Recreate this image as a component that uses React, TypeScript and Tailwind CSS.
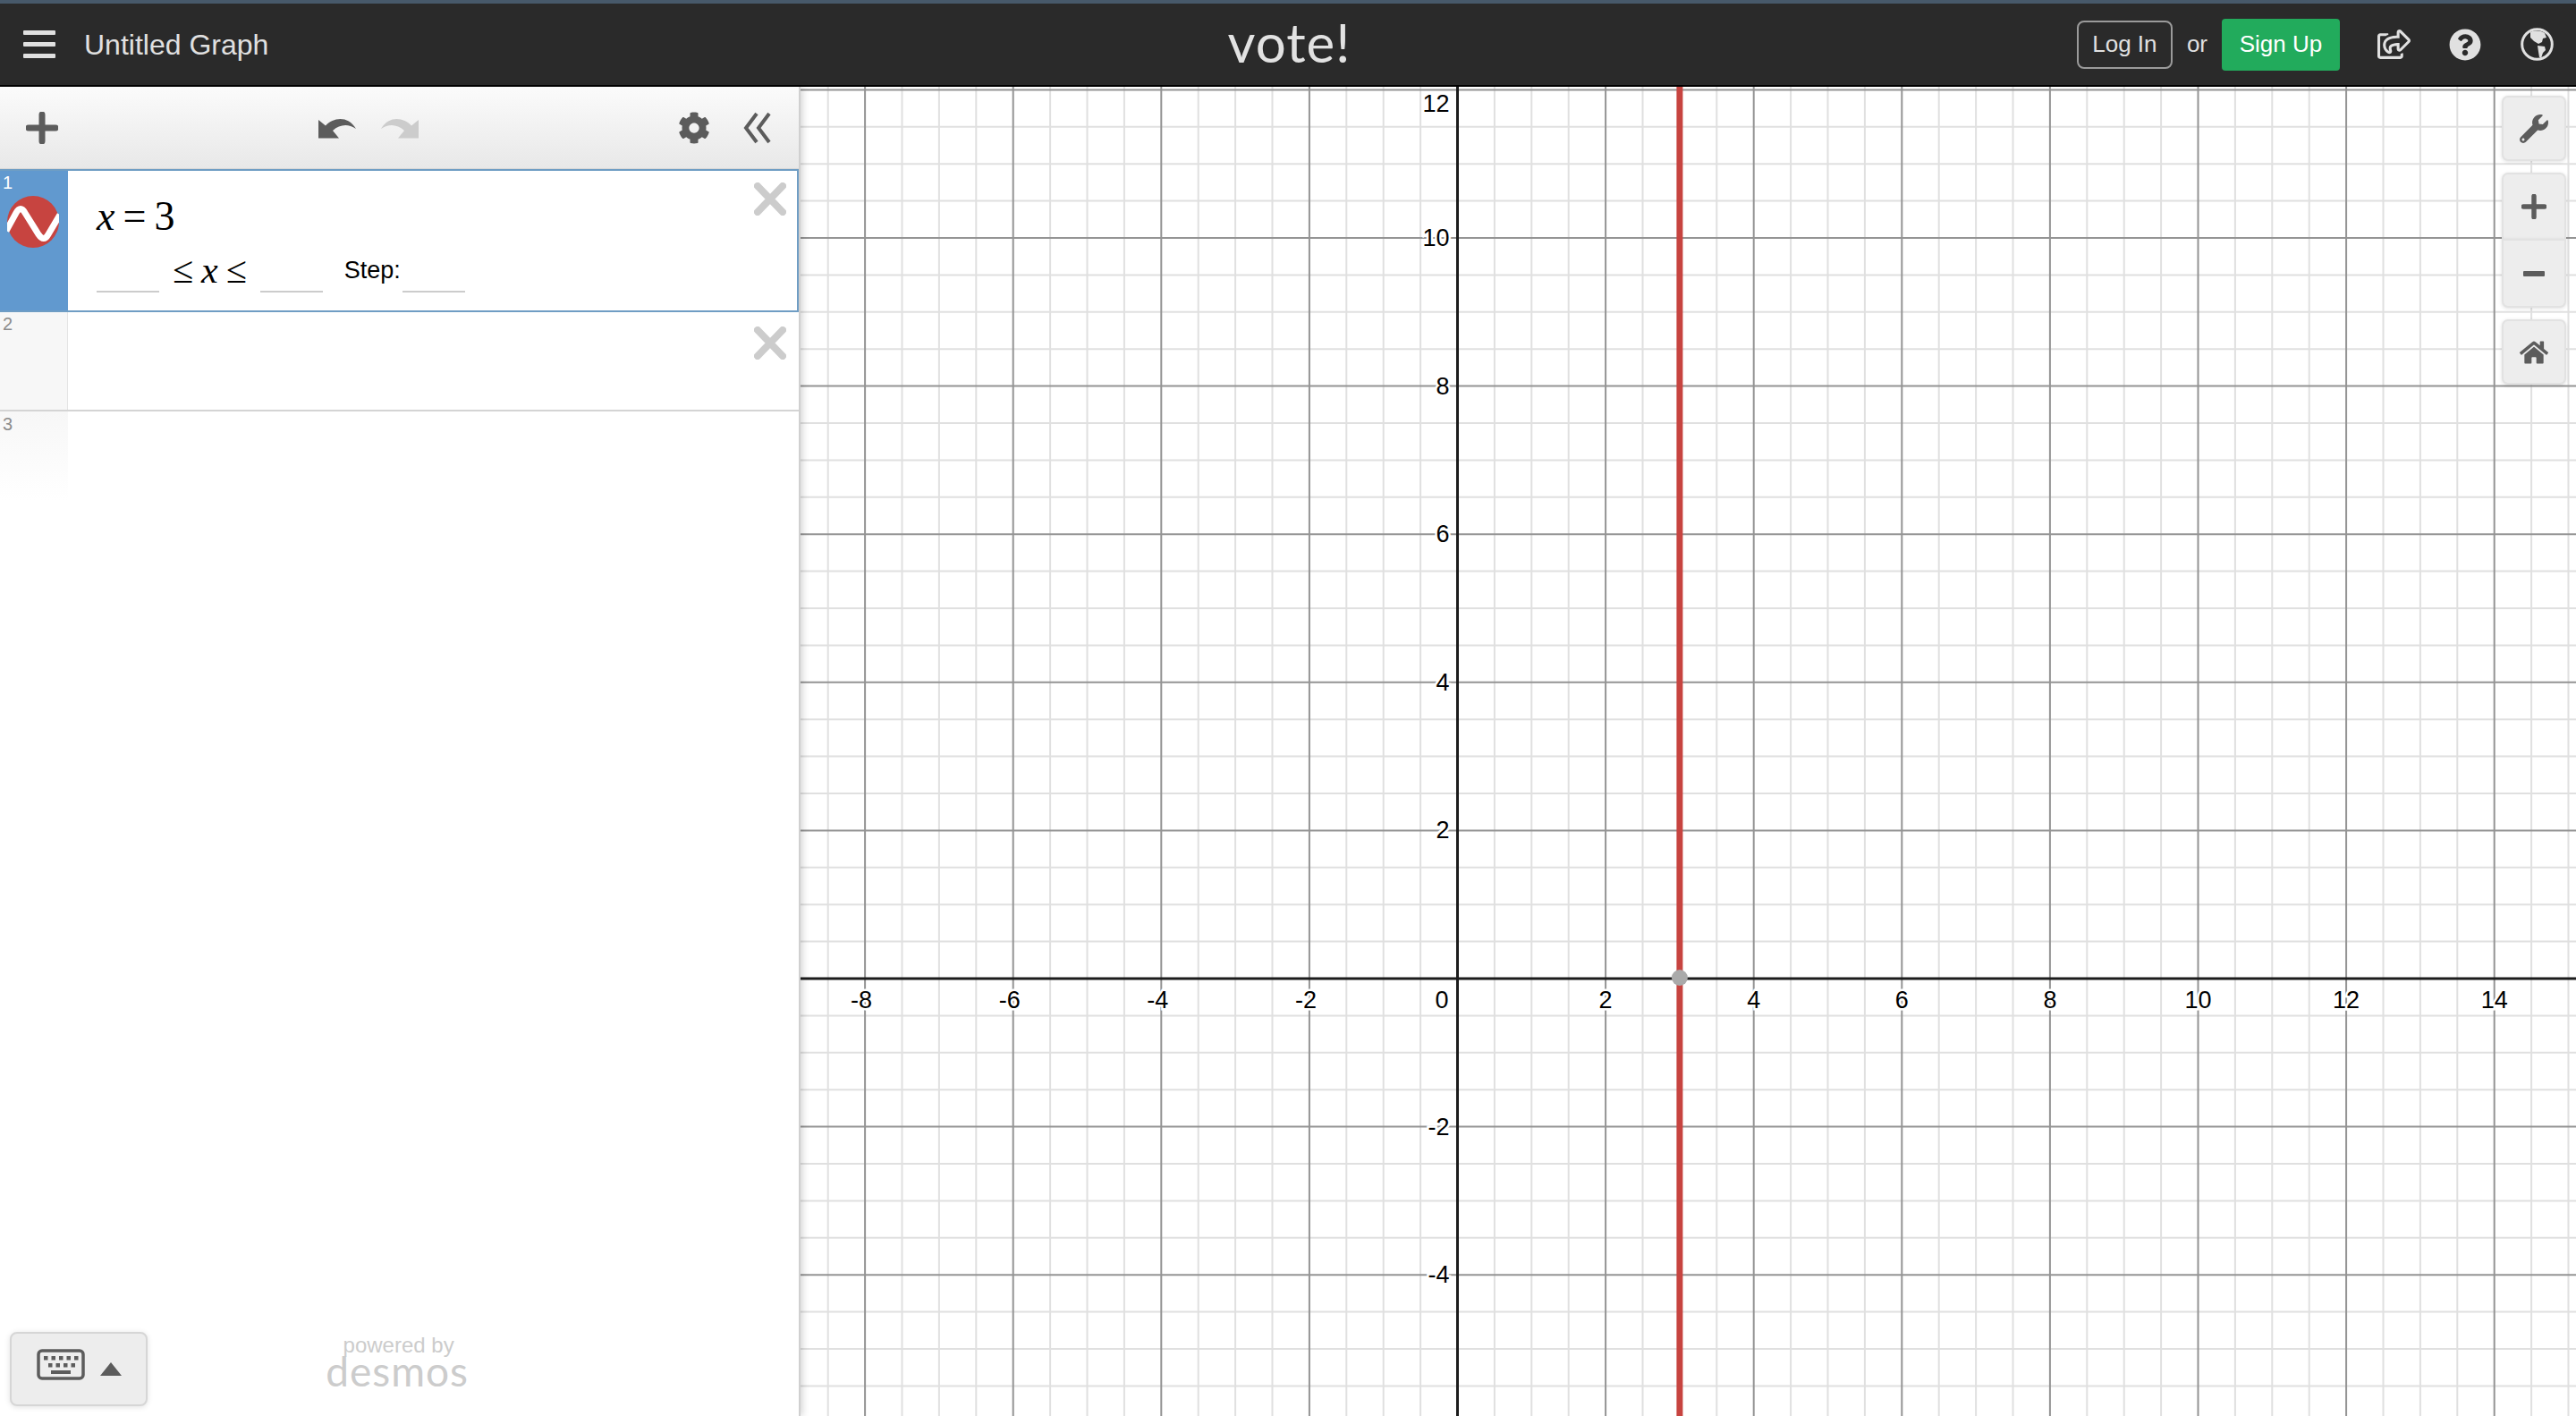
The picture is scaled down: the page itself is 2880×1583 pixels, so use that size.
import { FaCog, FaHome, FaQuestionCircle, FaRegShareSquare, FaWrench } from "react-icons/fa";

const sans = "font-['Liberation_Sans',Arial,sans-serif]";

// graph geometry, in page pixels with the graph's own corner taken off
const graphLeft = 895;
const graphTop = 97;
const graphWidth = 2880 - graphLeft;
const graphHeight = 1583 - graphTop;
const originX = 1629.5 - graphLeft;
const originY = 1094 - graphTop;
const unit = 82.8;

function range(from: number, to: number) {
  const out: number[] = [];
  for (let i = from; i <= to; i++) out.push(i);
  return out;
}

const minorX = range(-18, 30).filter((i) => i % 4 !== 0);
const minorY = range(-12, 26).filter((i) => i % 4 !== 0);
const majorX = range(-4, 7).filter((i) => i !== 0);
const majorY = range(-2, 6).filter((i) => i !== 0);

function Graph() {
  return (
    <svg width={graphWidth} height={graphHeight} className="block">
      <rect width={graphWidth} height={graphHeight} fill="#ffffff" />
      {minorX.map((i) => (
        <line key={i} x1={originX + (i * unit) / 2} x2={originX + (i * unit) / 2} y1={0} y2={graphHeight} stroke="#e0e0e0" strokeWidth={2} />
      ))}
      {minorY.map((i) => (
        <line key={i} y1={originY - (i * unit) / 2} y2={originY - (i * unit) / 2} x1={0} x2={graphWidth} stroke="#e0e0e0" strokeWidth={2} />
      ))}
      {majorX.map((i) => (
        <line key={i} x1={originX + i * 2 * unit} x2={originX + i * 2 * unit} y1={0} y2={graphHeight} stroke="#949494" strokeWidth={2} />
      ))}
      {majorY.map((i) => (
        <line key={i} y1={originY - i * 2 * unit} y2={originY - i * 2 * unit} x1={0} x2={graphWidth} stroke="#949494" strokeWidth={2} />
      ))}
      <line x1={originX} x2={originX} y1={0} y2={graphHeight} stroke="#1c1c1c" strokeWidth={3} />
      <line x1={0} x2={graphWidth} y1={originY} y2={originY} stroke="#1c1c1c" strokeWidth={3} />
      <line x1={originX + 3 * unit} x2={originX + 3 * unit} y1={0} y2={graphHeight} stroke="#c74440" strokeWidth={7} />
      <circle cx={originX + 3 * unit} cy={originY - 1} r={9} fill="#aaaaaa" />
      <g fontFamily="'Liberation Sans', Arial, sans-serif" fontSize={27} fill="#000000" stroke="#ffffff" strokeWidth={5} paintOrder="stroke">
        {majorX.map((i) => (
          <text key={i} x={originX + i * 2 * unit - (i < 0 ? 4 : 0)} y={originY + 33} textAnchor="middle">
            {i * 2}
          </text>
        ))}
        <text x={originX - 10} y={originY + 33} textAnchor="end">0</text>
        {majorY.map((i) => (
          <text key={i} x={originX - 9} y={i === 6 ? 28 : originY - i * 2 * unit + 9} textAnchor="end">
            {i * 2}
          </text>
        ))}
      </g>
    </svg>
  );
}

function CurveIcon() {
  return (
    <svg width="58" height="58" viewBox="0 0 58 58" className="block">
      <circle cx="29" cy="29" r="29" fill="#c74440" />
      <path d="M-1 39 L10 19 Q15 10 20 19 L35 43 Q41 52 46 43 L59 21" fill="none" stroke="#ffffff" strokeWidth="7" />
    </svg>
  );
}

function UndoIcon({ flip, color }: { flip?: boolean; color: string }) {
  return (
    <svg width="42" height="24" viewBox="0 0 42 24" className={flip ? "block -scale-x-100" : "block"}>
      <path d="M0 23.5 V3 L8 9.5 C17 0 33 -2 42 13 C33 7 24 8 16 15 L23 23.5 Z" fill={color} />
    </svg>
  );
}

function CloseX() {
  return (
    <svg width="36" height="37" viewBox="0 0 36 37" className="block">
      <path d="M4 4 L32 33 M32 4 L4 33" stroke="#cccccc" strokeWidth="8" strokeLinecap="round" />
    </svg>
  );
}

function PlusIcon({ size }: { size: number }) {
  return (
    <svg width={size} height={size} viewBox="0 0 36 36" className="block">
      <path d="M18 3 V33 M3 18 H33" stroke="#5c5c5c" strokeWidth="7" strokeLinecap="round" />
    </svg>
  );
}

function GlobeIcon() {
  return (
    <svg width="37" height="37" viewBox="0 0 37 37" className="ml-[44px] block">
      <circle cx="18.5" cy="18.5" r="16.8" fill="none" stroke="#e0e0e0" strokeWidth="3" />
      <path d="M11 5 C15 3 22 3 27 6 L29 11 L25 12 L24 16 L20 18 L15 15 L11 11 Z" fill="#e0e0e0" />
      <path d="M19 20 L27 21 L28 25 L25 28 L23 34 L21 33 L20 27 Z" fill="#e0e0e0" />
    </svg>
  );
}

function Blank() {
  return <div className="h-[2px] w-[70px] self-end bg-[#cccccc]" />;
}

function ExpressionRow() {
  return (
    <div className="relative flex h-[160px] border-2 border-l-0 border-[#6f9dc4]">
      <div className="relative w-[76px] shrink-0 bg-[#6199cf]">
        <span className={`${sans} absolute left-[3px] top-[3px] text-[20px] leading-5 text-white`}>1</span>
        <div className="absolute left-[8px] top-[28px]">
          <CurveIcon />
        </div>
      </div>
      <div className="pl-[32px] pt-[29px]">
        <div className="font-['Liberation_Serif',serif] flex h-[44px] items-center text-[46px] leading-none text-black">
          <i>x</i>
          <span className="mx-[9px]">=</span>
          <span>3</span>
        </div>
        <div className="mt-[25px] flex h-[44px] items-end pb-[6px]">
          <Blank />
          <div className="font-['Liberation_Serif',serif] ml-[15px] mr-[15px] mb-[9px] flex items-center gap-[9px] text-[42px] leading-8 text-black">
            <span>≤</span>
            <i>x</i>
            <span>≤</span>
          </div>
          <Blank />
          <span className={`${sans} ml-[24px] mb-[11px] text-[27px] leading-7 text-black`}>Step:</span>
          <div className="ml-[2px]">
            <Blank />
          </div>
        </div>
      </div>
      <div className="absolute right-[12px] top-[13px]">
        <CloseX />
      </div>
    </div>
  );
}

function Sidebar() {
  return (
    <aside className={`${sans} relative z-10 flex h-full w-[895px] shrink-0 flex-col border-r-2 border-[#d0d0d0] bg-white shadow-[2px_0_8px_rgba(0,0,0,0.18)]`}>
      <div className="flex h-[92px] shrink-0 items-center justify-between bg-gradient-to-b from-[#fbfbfb] to-[#e8e8e8] pl-[29px] pr-[30px] shadow-[inset_0_-1px_0_#d8d8d8]">
        <PlusIcon size={36} />
        <div className="flex items-center gap-[28px]">
          <UndoIcon color="#5c5c5c" />
          <UndoIcon flip color="#cccccc" />
        </div>
        <div className="flex items-center gap-[37px]">
          <FaCog className="text-[36px] text-[#5c5c5c]" />
          <svg width="32" height="36" viewBox="0 0 32 36" className="block">
            <path d="M15 2 L3 18 L15 34 M29 2 L17 18 L29 34" fill="none" stroke="#5c5c5c" strokeWidth="4" />
          </svg>
        </div>
      </div>
      <ExpressionRow />
      <div className="relative flex h-[111px] border-b-2 border-[#d4d4d4]">
        <div className="w-[76px] border-r border-[#e4e4e4] bg-[#f7f7f7] pl-[3px] pt-[3px] text-[20px] leading-5 text-[#8c8c8c]">2</div>
        <div className="absolute right-[14px] top-[16px]">
          <CloseX />
        </div>
      </div>
      <div className="h-[100px] w-[76px] bg-gradient-to-b from-[#f7f7f7] to-white pl-[3px] pt-[4px] text-[20px] leading-5 text-[#8c8c8c]">3</div>
      <div className="mt-auto flex items-end justify-between pb-[11px] pl-[11px] pr-[369px]">
        <div className="flex h-[83px] w-[154px] items-start gap-[17px] rounded-[8px] border-2 border-[#d6d6d6] bg-[#ededed] pl-[28px] pt-[17px] shadow-[0_1px_6px_rgba(0,0,0,0.12)]">
          <svg width="54" height="35" viewBox="0 0 54 35" className="block">
            <rect x="2" y="2" width="50" height="31" rx="4" fill="none" stroke="#5c5c5c" strokeWidth="3.5" />
            {[8, 16.5, 25, 33.5, 42].map((x) => (
              <rect key={x} x={x} y="8" width="4.5" height="4.5" fill="#5c5c5c" />
            ))}
            {[13, 21.5, 30, 38.5].map((x) => (
              <rect key={x} x={x} y="16" width="4.5" height="4.5" fill="#5c5c5c" />
            ))}
            <rect x="16" y="24" width="22" height="4" fill="#5c5c5c" />
          </svg>
          <svg width="24" height="15" viewBox="0 0 24 15" className="mt-[15px] block">
            <path d="M12 0 L24 15 H0 Z" fill="#5c5c5c" />
          </svg>
        </div>
        <div className="mb-[21px] flex flex-col items-center text-[#cccccc]">
          <span className="pl-[3px] text-[24px] leading-[22px]">powered by</span>
          <span className="font-['Lato',sans-serif] text-[46px] leading-[36px] tracking-[1px]">desmos</span>
        </div>
      </div>
    </aside>
  );
}

function GraphTools() {
  const box = "flex w-[72px] items-center justify-center border-2 border-[#e2e2e2] bg-[#ededed] shadow-[0_1px_4px_rgba(0,0,0,0.12)]";
  return (
    <div className="absolute right-[11px] top-[10px] flex flex-col">
      <div className={`${box} h-[73px] rounded-[7px]`}>
        <FaWrench className="text-[32px] text-[#5c5c5c]" />
      </div>
      <div className={`${box} mt-[13px] h-[74px] rounded-t-[7px] border-b-0`}>
        <PlusIcon size={28} />
      </div>
      <div className={`${box} h-[77px] rounded-b-[7px]`}>
        <div className="h-[6px] w-[24px] rounded-[1px] bg-[#5c5c5c]" />
      </div>
      <div className={`${box} mt-[13px] h-[73px] rounded-[7px]`}>
        <FaHome className="text-[32px] text-[#5c5c5c]" />
      </div>
    </div>
  );
}

function Header() {
  return (
    <header className={`${sans} grid h-[97px] shrink-0 grid-cols-3 items-center border-t-[4px] border-b-[2px] border-t-[#47596a] border-b-black bg-[#2a2a2a] text-[#e0e0e0]`}>
      <div className="flex items-center pl-[26px]">
        <div className="flex w-[36px] flex-col gap-[8px]">
          <div className="h-[5px] rounded-[1px] bg-[#e0e0e0]" />
          <div className="h-[5px] rounded-[1px] bg-[#e0e0e0]" />
          <div className="h-[5px] rounded-[1px] bg-[#e0e0e0]" />
        </div>
        <span className="ml-[32px] text-[32px] leading-10">Untitled Graph</span>
      </div>
      <div className="flex justify-center">
        <span className="font-['Lato',sans-serif] mb-[5px] pl-[3px] text-[60px] leading-[60px] tracking-[1px] text-[#e2e2e2]">vote!</span>
      </div>
      <div className="flex items-center justify-end pr-[25px]">
        <div className="flex h-[54px] w-[107px] items-center justify-center rounded-[8px] border-2 border-[#9a9a9a] text-[26px]">Log In</div>
        <span className="mx-[16px] text-[26px]">or</span>
        <div className="flex h-[58px] w-[132px] items-center justify-center rounded-[4px] bg-[#22ab5c] text-[26px] text-white">Sign Up</div>
        <FaRegShareSquare className="ml-[42px] text-[37px]" />
        <FaQuestionCircle className="ml-[43px] text-[36px]" />
        <GlobeIcon />
      </div>
    </header>
  );
}

export default function App() {
  return (
    <div className="flex h-[1583px] w-[2880px] flex-col overflow-hidden bg-white">
      <Header />
      <div className="flex min-h-0 flex-1">
        <Sidebar />
        <main className="relative flex-1 overflow-hidden">
          <Graph />
          <GraphTools />
        </main>
      </div>
    </div>
  );
}
